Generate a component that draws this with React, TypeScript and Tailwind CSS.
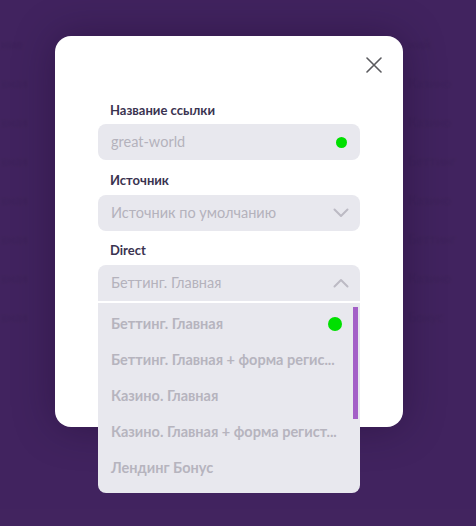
import React from "react";

const leftRows = ["ние", "вная", "вная", "вная", "вная", "вная", "вная", "вная"];
const rightRows = ["ний", "Казино", "Казино", "Беттинг", "Казино", "Беттинг", "Казино", "Бонус"];

const items = [
  "Беттинг. Главная",
  "Беттинг. Главная + форма регис...",
  "Казино. Главная",
  "Казино. Главная + форма регист...",
  "Лендинг Бонус",
];

function Chevron({ up }: { up?: boolean }) {
  return (
    <svg width="16" height="10" viewBox="0 0 16 10" fill="none">
      <path
        d={up ? "M1.5 8.5 L8 2 L14.5 8.5" : "M1.5 1.5 L8 8 L14.5 1.5"}
        stroke="#bcbac4"
        strokeWidth="2"
        strokeLinecap="round"
        strokeLinejoin="round"
      />
    </svg>
  );
}

export default function App() {
  return (
    <div
      className="relative h-[526px] w-[476px] overflow-hidden bg-[#42245f]"
      style={{ fontFamily: "Lato, 'Open Sans', sans-serif" }}
    >
      {/* faint background page */}
      <div className="flex justify-between pt-[35px] blur-[1px]">
        <div className="flex flex-col gap-[21px] pl-[1px] text-[13px] leading-[18px] text-[#3c2158]">
          {leftRows.map((r, i) => (
            <div key={i} className={i === 0 ? "font-bold" : ""}>
              {r}
            </div>
          ))}
        </div>
        <div className="flex w-[68px] flex-col gap-[21px] text-[13px] leading-[18px] text-[#3c2158]">
          {rightRows.map((r, i) => (
            <div key={i} className={i === 0 ? "font-bold" : "whitespace-nowrap"}>
              {r}
            </div>
          ))}
        </div>
      </div>

      {/* overlay */}
      <div className="absolute inset-0 bg-[#42245f]/40 pl-[55px] pt-[36px]">
        <div className="relative w-[348px] rounded-[16px] bg-white px-[43px] pb-[126px] pt-[66px] shadow-[0_0_40px_rgba(20,5,35,0.35)]">
          <button className="absolute right-[21px] top-[21px] flex h-[16px] w-[16px] items-center justify-center">
            <svg width="16" height="16" viewBox="0 0 16 16" fill="none">
              <path d="M1 1 L15 15 M15 1 L1 15" stroke="#5a5a5e" strokeWidth="1.6" strokeLinecap="round" />
            </svg>
          </button>

          <div className="flex flex-col">
            <div className="mb-[6px] pl-[12px] text-[13px] font-bold leading-[16px] text-[#3a3350]">
              Название ссылки
            </div>
            <div className="flex h-[36px] items-center justify-between rounded-[8px] bg-[#e8e8ee] pl-[13px] pr-[13px]">
              <span className="text-[14.5px] text-[#b4b2bc]">great-world</span>
              <span className="h-[11px] w-[11px] rounded-full bg-[#00e000]" />
            </div>

            <div className="mb-[7px] mt-[12px] pl-[12px] text-[13px] font-bold leading-[16px] text-[#3a3350]">
              Источник
            </div>
            <div className="flex h-[36px] items-center justify-between rounded-[8px] bg-[#e8e8ee] pl-[13px] pr-[11px]">
              <span className="text-[14.5px] text-[#b4b2bc]">Источник по умолчанию</span>
              <Chevron />
            </div>

            <div className="mb-[7px] mt-[11px] pl-[12px] text-[13px] font-bold leading-[16px] text-[#3a3350]">
              Direct
            </div>
            <div className="relative">
              <div className="flex h-[36px] items-center justify-between rounded-t-[8px] bg-[#e8e8ee] pl-[13px] pr-[11px]">
                <span className="text-[14.5px] text-[#b4b2bc]">Беттинг. Главная</span>
                <Chevron up />
              </div>
              <div className="absolute left-0 right-0 top-[38px] z-10 h-[190px] rounded-b-[8px] bg-[#e8e8ee] pt-[3px]">
                <div className="absolute right-[2px] top-[4px] h-[112px] w-[5px] bg-[#a35fc7]" />
                {items.map((it, i) => (
                  <div key={i} className="flex h-[36px] items-center justify-between pl-[13px] pr-[18px]">
                    <span className="whitespace-nowrap text-[14.5px] font-bold text-[#b6b4be]">{it}</span>
                    {i === 0 && <span className="ml-2 h-[14px] w-[14px] shrink-0 rounded-full bg-[#00e000]" />}
                  </div>
                ))}
              </div>
            </div>
          </div>
        </div>
      </div>
    </div>
  );
}
